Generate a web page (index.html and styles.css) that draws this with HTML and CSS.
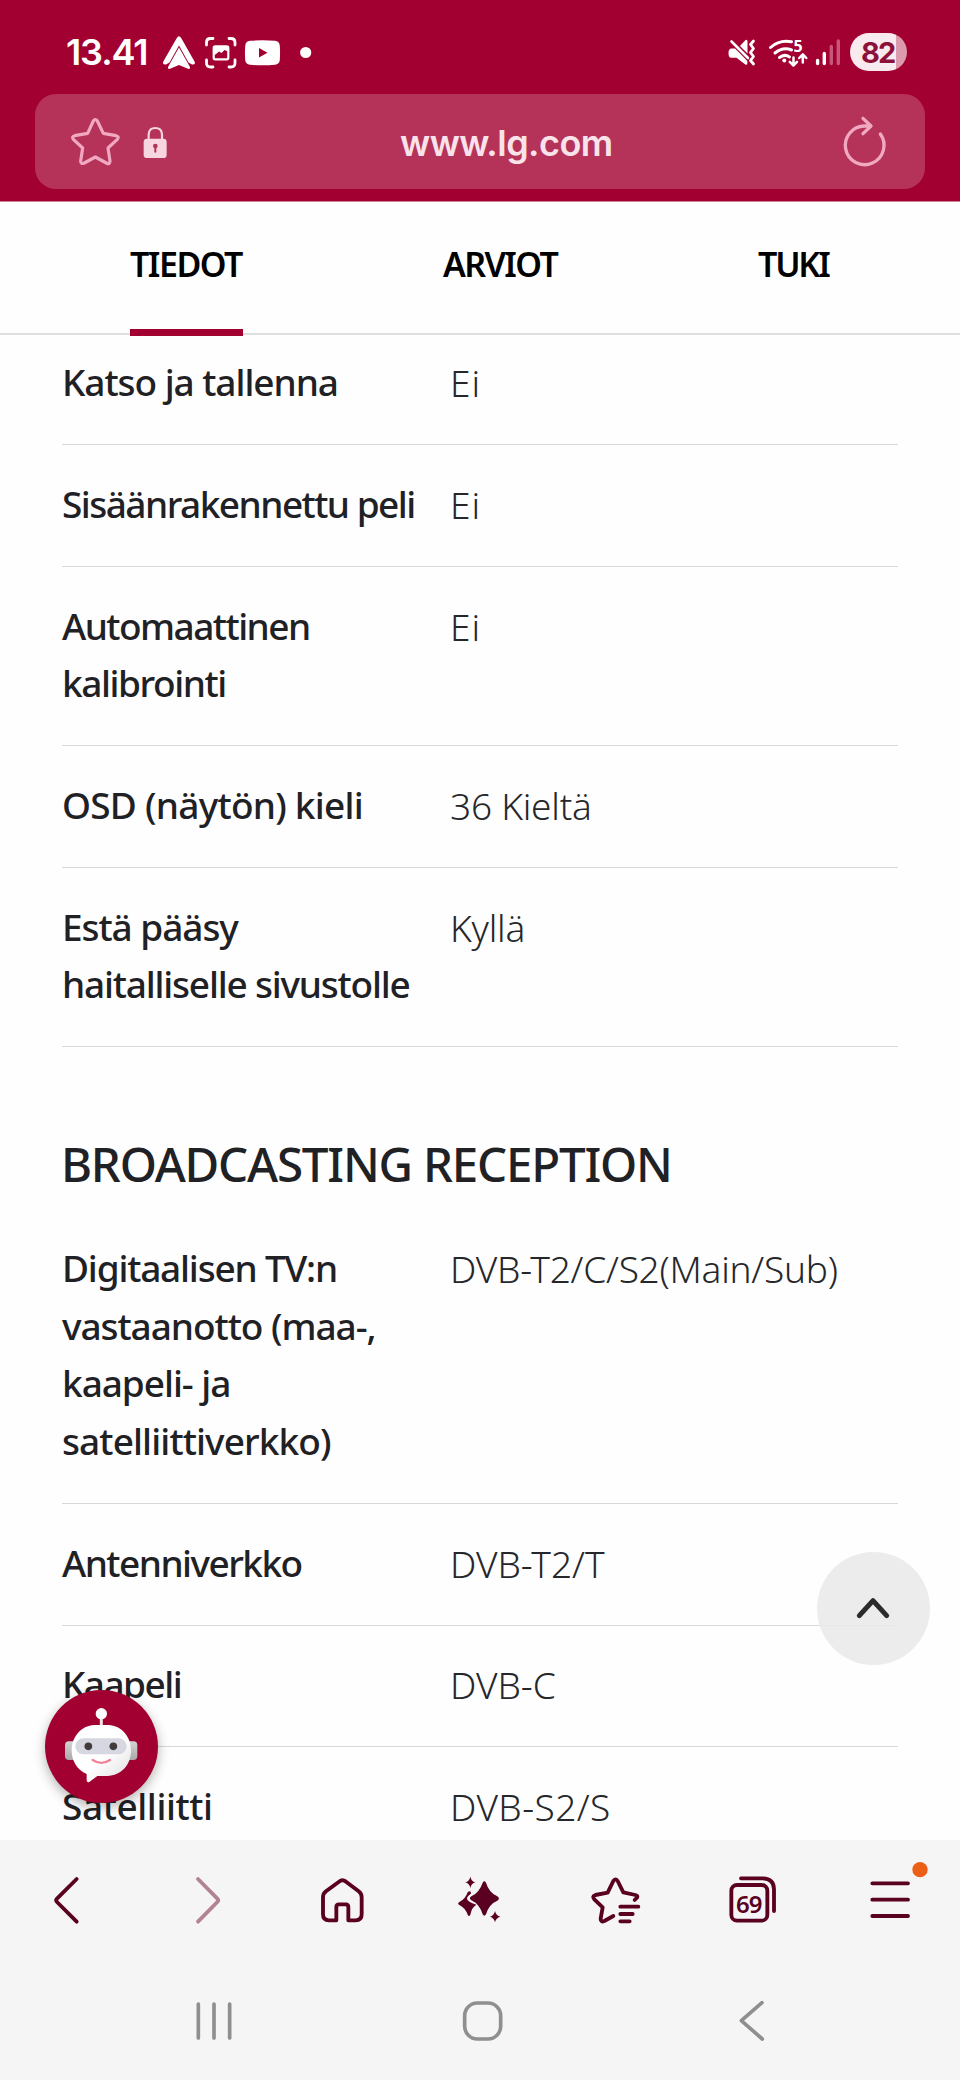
FILE: index.html
```html
<!DOCTYPE html>
<html lang="fi">
<head>
<meta charset="utf-8">
<title>www.lg.com</title>
<link rel="stylesheet" href="styles.css">
</head>
<body>
<div class="phone">
  <header class="top">
    <div class="status">
      <span class="time">13.41</span>
      <svg class="st" width="42" height="44" viewBox="160 30 42 44" fill="#fff">
        <path d="M176.800 38Q179 34.500 181.200 38L194.500 61.500Q196 65 192 64.500L188.500 62.500L179 45.500L169.500 62.500L166 64.500Q162 65 163.300 61.500Z"/>
        <path d="M179 47.500L190 67Q190.500 69.500 188 68.800L179 65L170 68.800Q167.500 69.500 168 67Z"/>
      </svg>
      <svg class="st" width="40" height="44" viewBox="202 30 40 44" fill="none" stroke="#fff" stroke-width="2.800" stroke-linecap="round">
        <path d="M206.500 45V42.500Q206.500 38.500 210.500 38.500H213M229 38.500H231Q235 38.500 235 42.500V45M235 60V63Q235 67 231 67H229M213 67H210.500Q206.500 67 206.500 63V60"/>
        <rect x="213.700" y="46.300" width="14.600" height="13" rx="1.500" stroke-width="2.200"/>
        <path d="M214 46H228V51.500L224.500 50L221.500 53L219 51.500L215.500 54.500L214 54.500Z" fill="#fff" stroke="none"/>
      </svg>
      <svg class="st" width="74" height="44" viewBox="242 30 74 44" fill="#fff">
        <path d="M250 40.800Q262.500 39.800 275 40.800Q279.500 41.300 279.800 46Q280.300 53 279.800 60Q279.400 64.300 275 64.800Q262.500 65.800 250 64.800Q245.600 64.300 245.200 60Q244.700 53 245.200 46Q245.600 41.300 250 40.800Z"/>
        <path d="M259 48L267.500 52.800L259 57.500Z" fill="#a20031"/>
        <circle cx="305.700" cy="52.500" r="5.600"/>
      </svg>
      <span class="spacer"></span>
      <svg class="st" width="38" height="44" viewBox="726 30 38 44" fill="#fff">
        <path d="M731 48.500H735L743 56.500L747.300 61V64Q746.800 65.500 745 64.300L736.500 57.800H731Q728.500 57.500 728.500 53Q728.500 49 731 48.500Z"/>
        <path d="M740 46L745.300 40.300Q747.500 38.800 747.500 41.500V53.500Z"/>
        <path d="M731.500 41.500L748 58" stroke="#fff" stroke-width="2.600" stroke-linecap="round"/>
        <path d="M753.500 41L750.500 44.500L753.500 48.500L750.500 52.500L753.500 56.500L750.500 60.500L753.500 64" fill="none" stroke="#fff" stroke-width="2.800" stroke-linecap="round" stroke-linejoin="round"/>
      </svg>
      <svg class="st" width="48" height="44" viewBox="764 30 48 44" fill="none" stroke="#fff" stroke-width="3" stroke-linecap="round">
        <path d="M770.500 47.500Q779.500 39.500 791.500 41.800M775 53Q783 46.500 791.500 50M779.500 57.500Q784.500 53.500 789.500 57"/>
        <circle cx="784.300" cy="60.500" r="2" fill="#fff" stroke="none"/>
        <path d="M793.500 57.500V65M789.800 61.800L793.500 65.500L797 61.800M802.800 62.500V54.500M799.200 58L802.800 54.300L806.300 58" stroke-width="2.500" stroke-linejoin="round"/>
        <text x="793.500" y="52.300" class="wifi-gen">5</text>
      </svg>
      <svg class="st" width="38" height="44" viewBox="812 30 38 44" stroke="#fff" stroke-width="3.400" stroke-linecap="round">
        <path d="M817.600 60.500V63.500M824.300 53.500V63.500"/>
        <path d="M831.300 46.500V63.500M838.300 41V63.500" stroke="#c8567a"/>
      </svg>
      <span class="battery">82</span>
    </div>
    <div class="urlbar">
      <svg class="star" width="55" height="55" viewBox="203 343 165 165" fill="none" stroke="#f0a9c1" stroke-width="9.500" stroke-linejoin="round">
        <path d="M279 364Q285 355 291 364L309 401L347 408Q358 411 351 419L323 445L329 484Q329 496 318 490L285 472L252 490Q241 495 241 484L247 445L219 419Q213 411 223 408L262 401Z"/>
      </svg>
      <svg class="lock" width="26" height="34" viewBox="427 375 78 102">
        <path d="M447 420V403Q448 384 467 384Q486 384 487 403V420" fill="none" stroke="#f7d5e1" stroke-width="6.500"/>
        <rect x="432" y="416" width="69" height="58" rx="10" fill="#f7d5e1"/>
        <circle cx="467" cy="438" r="7" fill="#b53359"/><path d="M467 438V455" stroke="#b53359" stroke-width="6" stroke-linecap="round"/>
      </svg>
      <span class="url">www.lg.com</span>
      <svg class="reload" width="50" height="55" viewBox="1080 338 150 165" fill="none" stroke="#f0a9c1" stroke-width="10" stroke-linecap="round" stroke-linejoin="round">
        <path d="M1201 398A58 58 0 1 1 1155 374L1172 374M1149 351L1173 374L1149 397"/>
      </svg>
    </div>
  </header>

  <nav class="tabs">
    <span class="tab tab-info active">TIEDOT</span>
    <span class="tab tab-reviews">ARVIOT</span>
    <span class="tab tab-support">TUKI</span>
  </nav>

  <main class="specs">
    <div class="row first"><div class="name">Katso ja tallenna</div><div class="value wide">Ei</div></div>
    <div class="row"><div class="name tight3">Sisäänrakennettu peli</div><div class="value wide">Ei</div></div>
    <div class="row"><div class="name"><span class="tight3">Automaattinen</span><br><span class="tight2">kalibrointi</span></div><div class="value wide">Ei</div></div>
    <div class="row"><div class="name loose">OSD (näytön) kieli</div><div class="value snug">36 Kieltä</div></div>
    <div class="row"><div class="name">Estä pääsy<br><span class="tight1">haitalliselle sivustolle</span></div><div class="value snug">Kyllä</div></div>

    <h2>BROADCASTING RECEPTION</h2>
    <div class="row"><div class="name"><span class="tight1">Digitaalisen TV:n</span><br>vastaanotto (maa-,<br>kaapeli- ja<br><span class="loose1">satelliittiverkko)</span></div><div class="value snug">DVB-T2/C/S2(Main/Sub)</div></div>
    <div class="row"><div class="name tight3">Antenniverkko</div><div class="value">DVB-T2/T</div></div>
    <div class="row"><div class="name tight3">Kaapeli</div><div class="value">DVB-C</div></div>
    <div class="row"><div class="name looser">Satelliitti</div><div class="value open">DVB-S2/S</div></div>
  </main>

  <div class="to-top">
    <svg width="113" height="113" viewBox="1012 36 339 339" fill="none" stroke="#2b2b2b" stroke-width="15" stroke-linecap="round" stroke-linejoin="round"><path d="M1139 227L1180 182L1221 227"/></svg>
  </div>
  <div class="chat">
    <svg width="113" height="113" viewBox="135 449 339 339">
      <defs>
        <linearGradient id="face" x1="0" y1="0" x2="1" y2="1"><stop offset=".55" stop-color="#fff"/><stop offset="1" stop-color="#dcdcde"/></linearGradient>
        <linearGradient id="ear" x1="0" y1="0" x2="0" y2="1"><stop offset="0" stop-color="#d4d4d4"/><stop offset="1" stop-color="#a9a9ab"/></linearGradient>
      </defs>
      <path d="M304 525V560" stroke="#f3dfe5" stroke-width="9"/>
      <circle cx="304" cy="520" r="17" fill="#fff"/>
      <rect x="195" y="603" width="40" height="56" rx="12" fill="url(#ear)"/>
      <rect x="372" y="603" width="40" height="56" rx="12" fill="url(#ear)"/>
      <path d="M283 554H325C366 556 393 590 393 630C393 674 364 706 322 707H292L268 725Q260 728 260 719V701C231 689 215 662 215 630C215 590 243 556 283 554Z" fill="url(#face)"/>
      <rect x="226" y="594" width="154" height="48" rx="24" fill="#d6d7e0"/>
      <circle cx="265" cy="618" r="11.500" fill="#413c3b"/><circle cx="340" cy="618" r="11.500" fill="#413c3b"/>
      <path d="M278 659Q304 676 330 659" fill="none" stroke="#ee8497" stroke-width="7" stroke-linecap="round"/>
    </svg>
  </div>

  <footer class="bottom">
    <div class="tools">
      <svg width="60" height="60" viewBox="116 120 180 180" class="ico"><path d="M229 147L170 206Q165 211 170 216L229 275"/></svg>
      <svg width="60" height="60" viewBox="527 120 180 180" class="ico dim"><path d="M593 147L651 206Q656 211 651 216L593 275"/></svg>
      <svg width="60" height="60" viewBox="938 120 180 180" class="ico"><path d="M1016 155Q1026 147 1037 155L1075 184Q1084 191 1084 202V253Q1084 271 1066 271H1044V231Q1044 223 1036 223H1016Q1008 223 1008 231V271H986Q968 271 968 253V202Q968 191 977 184Z"/></svg>
      <svg width="60" height="60" viewBox="1350 120 180 180" fill="#5a0020">
        <path d="M1411 140Q1414 154 1426 157Q1414 160 1411 174Q1408 160 1396 157Q1408 154 1411 140Z"/>
        <path d="M1485 243Q1488 257 1501 260Q1488 263 1485 277Q1482 263 1470 260Q1482 257 1485 243Z"/>
        <path d="M1448 158Q1453 150 1458 158Q1467 188 1492 199Q1502 206 1492 212Q1467 222 1458 253Q1453 261 1448 253Q1438 222 1414 211Q1405 205 1414 199Q1438 188 1448 158Z"/>
        <path d="M1403 187Q1408 181 1412 185L1413 191Q1401 199 1401 206Q1402 215 1429 224Q1415 232 1411 254Q1407 262 1403 254Q1396 234 1378 225Q1371 220 1378 216Q1396 208 1403 187Z"/>
      </svg>
      <svg width="60" height="60" viewBox="321 120 180 180" class="ico"><path d="M400 258L373 273Q362 278 362 266L368 232L343 208Q335 198 346 195L383 188L400 153Q406 143 413 153L430 187L466 195Q475 197 471 203L464 210M421 230H475M421 252H458M421 274H449"/></svg>
      <svg width="60" height="60" viewBox="733 120 180 180" class="ico"><rect x="755" y="165" width="108" height="107" rx="17"/><path d="M784 145H850Q883 146 883 178V243"/><text x="769" y="249" class="tab-count">69</text></svg>
      <svg width="60" height="60" viewBox="1144 120 180 180" class="ico menu"><path d="M1178 160H1285M1178 209H1285M1178 258H1285"/><circle cx="1321" cy="119" r="23" fill="#ec5f17" stroke="none"/></svg>
    </div>
    <div class="keys">
      <svg width="60" height="60" viewBox="550 484 180 180" class="key"><path d="M593 523V625M640 523V625M687 523V625"/></svg>
      <svg width="60" height="60" viewBox="1357 484 180 180" class="key"><rect x="1392" y="520" width="108" height="108" rx="38"/></svg>
      <svg width="60" height="60" viewBox="724 484 180 180" class="key"><path d="M844 519L782 573L845 628"/></svg>
    </div>
  </footer>
</div>
</body>
</html>
```
FILE: styles.css
```css
* { box-sizing: border-box; }
body { margin: 0; background: #fff; }
svg { display: block; flex: none; overflow: visible; }

.phone {
  position: relative;
  display: flex;
  flex-direction: column;
  width: 960px;
  height: 2080px;
  overflow: hidden;
  background: #fefefe;
  font-family: "Noto Sans", sans-serif;
  color: #1f2125;
}

/* Status bar and address bar */
.top { flex: none; height: 202px; background: #a20031; border-bottom: 1px solid #cf7f98; }
.status { display: flex; height: 94px; padding: 30px 53px 0 66px; }
.time { width: 94px; font: 600 36px/44px Inter, sans-serif; letter-spacing: -1.1px; color: #fff; }
.spacer { flex: 1; }
.battery {
  width: 57px;
  height: 38px;
  margin-top: 3px;
  padding-left: 11px;
  border-radius: 19px;
  background: linear-gradient(90deg, #f9eaef 0 81%, #dc9aae 81%);
  font: 700 29px/39px Inter, sans-serif;
  letter-spacing: -1.8px;
  color: #8c1038;
}
.wifi-gen { font: 700 16px "Noto Sans", sans-serif; fill: #fff; stroke: none; }
.urlbar {
  display: flex;
  align-items: center;
  height: 95px;
  margin: 0 35px;
  padding: 0 33px;
  border-radius: 21px;
  background: #b53359;
}
.lock { margin-left: 19px; }
.url { margin-left: 232px; padding-top: 2px; font: 600 36px/44px Inter, sans-serif; letter-spacing: -.55px; color: #f9e3eb; }
.reload { margin-left: auto; margin-right: 2px; }

/* Section tabs */
.tabs { display: flex; flex: none; gap: 200px; height: 133px; padding-left: 130px; border-bottom: 2px solid #dfdfdf; }
.tab { height: 134px; padding-top: 39px; font-size: 34px; line-height: 46px; font-weight: 600; white-space: nowrap; color: #000; }
.tab-info { width: 113px; letter-spacing: -1.5px; }
.tab-reviews { width: 115px; letter-spacing: -1.6px; }
.tab-support { width: 71px; letter-spacing: -2.2px; }
.active { border-bottom: 7px solid #a20031; }

/* Specification list */
.specs { flex: 1; min-height: 0; overflow: hidden; padding: 0 62px; }
.row { display: flex; padding: 29.800px 0 33.400px; border-bottom: 1px solid #d8d8d8; font-size: 37px; line-height: 57.600px; }
.first { padding-top: 18px; }
.name { flex: none; width: 388px; font-weight: 500; white-space: nowrap; letter-spacing: -1.05px; }
.value { padding-top: 1px; margin-bottom: -1px; font-weight: 300; white-space: nowrap; color: #26272a; }
.tight1 { letter-spacing: -1.2px; }
.tight2 { letter-spacing: -1.45px; }
.tight3 { letter-spacing: -1.53px; }
.loose { letter-spacing: -.75px; }
.loose1 { letter-spacing: -.89px; }
.looser { letter-spacing: -.42px; }
.wide { letter-spacing: 1px; }
.snug { letter-spacing: -.24px; }
.open { letter-spacing: .44px; }
h2 { margin: 84px 0 12px -1px; font-size: 47.500px; line-height: 66px; font-weight: 500; letter-spacing: -1.22px; white-space: nowrap; }

/* Floating buttons */
.to-top, .chat { position: absolute; width: 113px; height: 113px; border-radius: 50%; }
.to-top { left: 817px; top: 1552px; background: rgba(234, 234, 234, .9); }
.chat { left: 45px; top: 1690px; background: #a20031; box-shadow: 0 4px 12px rgba(0, 0, 0, .3); }

/* Browser toolbar and system keys */
.bottom { position: relative; flex: none; height: 240px; background: #f5f5f5; }
.tools { display: grid; grid-template-columns: repeat(7, 137.140px); justify-items: center; padding-top: 30px; }
.ico { fill: none; stroke: #5a0020; stroke-width: 11.500; stroke-linecap: round; stroke-linejoin: round; }
.dim { stroke: #b28493; }
.tab-count { font: 600 72px "Noto Sans", sans-serif; letter-spacing: -3px; fill: #5a0020; stroke: none; }
.keys { display: grid; grid-template-columns: repeat(3, 269px); justify-items: center; margin-left: 79px; padding-top: 61px; }
.key { fill: none; stroke: #8f8f8f; stroke-width: 11; stroke-linecap: round; stroke-linejoin: round; }
```
